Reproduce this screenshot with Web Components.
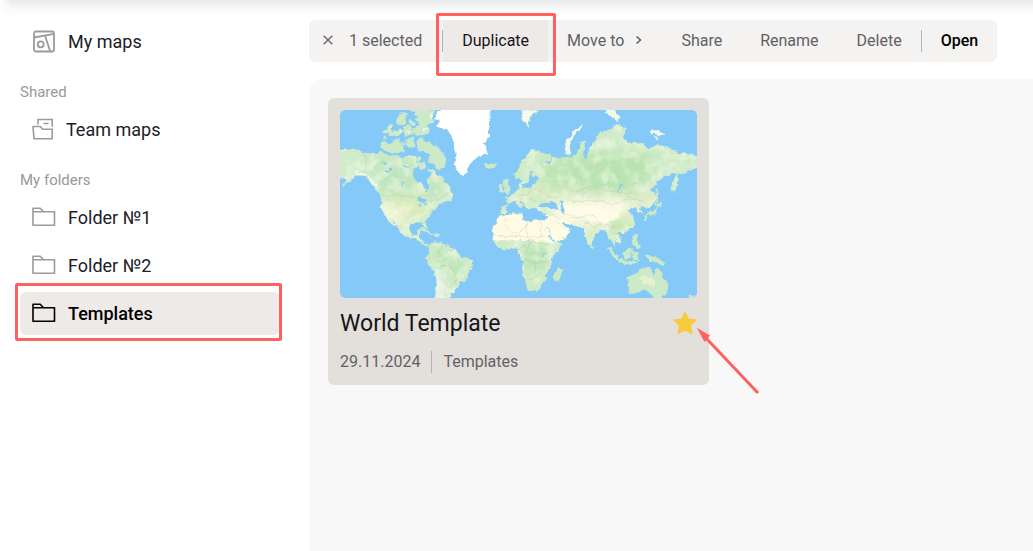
<!DOCTYPE html>
<html lang="en">
<head>
<meta charset="utf-8">
<meta name="viewport" content="width=device-width, initial-scale=1">
<title>Maps</title>
<style>
  body { margin: 0; background: #fff; color: #202027; font-family: Roboto, "Liberation Sans", sans-serif; font-size: 16px; }
</style>
</head>
<body>
<maps-app></maps-app>

<template id="t-maps-app">
  <style>
    :host { display: block; min-height: 100vh; }
    .layout { display: flex; gap: 29px; padding-left: 20px; }
    side-nav { flex: 0 0 260px; }
    main { flex: 1; min-width: 0; display: flex; flex-direction: column; gap: 17px; }
    .board { box-sizing: border-box; min-height: calc(100vh - 79px); padding: 19px; background: #f8f8f8; border-top-left-radius: 14px;
      display: grid; grid-template-columns: repeat(auto-fill, minmax(320px, 381px)); gap: 20px; align-items: start; align-content: start; }
  </style>
  <top-shade></top-shade>
  <div class="layout">
    <side-nav></side-nav>
    <main>
      <action-bar></action-bar>
      <section class="board" aria-label="Maps">
        <map-card>
          <span slot="title">World Template</span>
          <span slot="date">29.11.2024</span>
          <span slot="folder">Templates</span>
        </map-card>
      </section>
    </main>
  </div>
</template>

<template id="t-top-shade">
  <style>
    :host { display: block; height: 20px; background: linear-gradient(to right, #fff, #fff0 12px), linear-gradient(#e8eae9, #f1f2f2 5px, #fafafa 10px, #fff 17px); }
  </style>
</template>

<template id="t-side-nav">
  <style>
    :host { display: block; }
    nav { display: flex; flex-direction: column; }
    h2 { margin: 0; padding: 19px 0 6px; font-size: 15px; line-height: 20px; font-weight: 400; color: #9a9896; }
    .folders { display: flex; flex-direction: column; gap: 5px; }
    svg { display: block; fill: none; stroke: currentColor; }
  </style>
  <nav aria-label="Library">
    <nav-item>
      <svg slot="icon" width="24" height="24" viewBox="0 0 24 24" stroke-width="1.8"><rect x="2" y="1.500" width="20" height="20" rx="2"/><path d="M2 7.500L22 3.800M13 5.500L18.200 21.500"/><circle cx="8.700" cy="14.300" r="3"/></svg>
      My maps
    </nav-item>
    <h2>Shared</h2>
    <nav-item>
      <svg slot="icon" width="22" height="24" viewBox="0 0 22 24" stroke-width="1.6"><path d="M1 8.500H8.500L10.500 11.200H20.200V20.800H2Z" stroke-linejoin="round"/><path d="M6 6.500V1.500H20.200V8.700M11.500 5.500H16.500"/></svg>
      Team maps
    </nav-item>
    <h2>My folders</h2>
    <div class="folders">
      <nav-item>
        <svg slot="icon" width="24" height="24" viewBox="0 0 24 24" stroke-width="1.6"><path d="M1 19.300V2.200H8.200L11.500 5.700H22.500V19.300ZM1 5.700H12" stroke-linejoin="round"/></svg>
        Folder №1
      </nav-item>
      <nav-item>
        <svg slot="icon" width="24" height="24" viewBox="0 0 24 24" stroke-width="1.6"><path d="M1 19.300V2.200H8.200L11.500 5.700H22.500V19.300ZM1 5.700H12" stroke-linejoin="round"/></svg>
        Folder №2
      </nav-item>
      <nav-item selected>
        <svg slot="icon" width="24" height="24" viewBox="0 0 24 24" stroke-width="1.6"><path d="M1 19.300V2.200H8.200L11.500 5.700H22.500V19.300ZM1 5.700H12" stroke-linejoin="round"/></svg>
        Templates
      </nav-item>
    </div>
  </nav>
</template>

<template id="t-nav-item">
  <style>
    :host { display: block; position: relative; font-size: 18px; }
    a { display: flex; align-items: center; gap: 12px; height: 43px; padding-left: 12px; border-radius: 6px; color: #202027; text-decoration: none; white-space: nowrap; }
    .icon { color: #9d9a9a; }
    :host([selected]) a { background: #eeeae7; color: #000; font-weight: 500; }
    :host([selected]) .icon { color: #000; }
    .frame { display: none; position: absolute; inset: -9px -2px -6px -5px; border: 3px solid #ff6060; border-radius: 2px; pointer-events: none; }
    :host([selected]) .frame { display: block; }
  </style>
  <a href="#"><span class="icon"><slot name="icon"></slot></span><span><slot></slot></span></a>
  <span class="frame"></span>
</template>

<template id="t-action-bar">
  <style>
    :host { display: block; }
    .bar { display: flex; align-items: center; width: fit-content; max-width: 100%; height: 42px; background: #f5f3f2; border-radius: 6px; }
    .count { display: flex; align-items: center; gap: 15px; padding: 0 20px 2px 13px; color: #606065; white-space: nowrap; }
    .close { display: flex; padding: 0; border: 0; background: none; color: inherit; }
    .rule { width: 1px; height: 22px; background: #aeb4bc; }
    svg { display: block; fill: none; stroke: currentColor; stroke-width: 1.3; }
  </style>
  <div class="bar" role="toolbar" aria-label="Selection actions">
    <div class="count">
      <button class="close" aria-label="Clear selection"><svg width="12" height="12" viewBox="0 0 12 12"><path d="M1.700 1.700L10.300 10.300M10.300 1.700L1.700 10.300"/></svg></button>
      <span>1 selected</span>
    </div>
    <span class="rule"></span>
    <action-button active>Duplicate</action-button>
    <action-button>Move to<svg slot="after" width="8" height="10" viewBox="0 0 8 10"><path d="M1.500 1.500L5.500 5L1.500 8.500" stroke-width="1.600"/></svg></action-button>
    <action-button>Share</action-button>
    <action-button>Rename</action-button>
    <action-button>Delete</action-button>
    <span class="rule"></span>
    <action-button strong>Open</action-button>
  </div>
</template>

<template id="t-action-button">
  <style>
    :host { display: block; position: relative; }
    button { display: flex; align-items: center; gap: 11px; height: 42px; padding: 0 19px 2px; border: 0; background: none; color: #606065; font: inherit; white-space: nowrap; }
    :host([active]) button { background: #eeeae7; color: #15151c; }
    :host([strong]) button { color: #000; font-weight: 500; }
    .frame { display: none; position: absolute; inset: -7px -8px -14px -7px; border: 3px solid #ff6060; border-radius: 2px; pointer-events: none; z-index: 1; }
    :host([active]) .frame { display: block; }
  </style>
  <button><span><slot></slot></span><slot name="after"></slot></button>
  <span class="frame"></span>
</template>

<template id="t-map-card">
  <style>
    :host { display: block; position: relative; }
    article { padding: 12px; border-radius: 6px; background: #e3dfdb; }
    .head { display: flex; align-items: center; justify-content: space-between; margin-top: 7px; }
    h3 { margin: 0; padding-top: 3px; font-size: 23px; line-height: 32px; font-weight: 400; color: #15151a; }
    .meta { display: flex; align-items: center; gap: 11px; margin-top: 11px; line-height: 22px; color: #626266; }
    .rule { width: 1px; height: 22px; background: #aeb4bc; }
    .star { padding: 0; border: 0; background: none; }
    svg { display: block; }
    .arrow { position: absolute; left: 368px; top: 229px; pointer-events: none; }
  </style>
  <article>
    <world-map></world-map>
    <div class="head">
      <h3><slot name="title"></slot></h3>
      <button class="star" aria-label="Favourite"><svg width="24" height="24" viewBox="0 0 24 24"><path d="M12 2L15 8.600L22.400 9.300L16.900 14.300L18.500 21.900L12 18.300L5.500 21.900L7.100 14.300L1.600 9.300L9 8.600Z" fill="#f7cb3d" stroke="#f7cb3d" stroke-width="2" stroke-linejoin="round"/></svg></button>
    </div>
    <div class="meta"><slot name="date"></slot><span class="rule"></span><slot name="folder"></slot></div>
  </article>
  <svg class="arrow" width="66" height="70" viewBox="0 0 66 70" fill="#ff6060" aria-hidden="true"><path d="M8 9L62 66" stroke="#ff6060" stroke-width="3"/><path d="M1 1L14 8.500L8.500 15Z"/></svg>
</template>

<template id="t-world-map">
  <style>
    :host { display: block; border-radius: 6px; overflow: hidden; background: #84c9f8; }
    svg { display: block; width: 100%; height: auto; }
  </style>
  <svg viewBox="15 15 1071 564" role="img" aria-label="World map">
    <defs>
      <filter id="coast" x="-2%" y="-2%" width="104%" height="104%">
        <feTurbulence type="fractalNoise" baseFrequency="0.06" numOctaves="3" seed="4" result="n"/>
        <feDisplacementMap in="SourceGraphic" in2="n" scale="17" xChannelSelector="R" yChannelSelector="G"/>
        <feGaussianBlur stdDeviation="1"/>
      </filter>
      <filter id="soft" x="-30%" y="-30%" width="160%" height="160%"><feGaussianBlur stdDeviation="18"/></filter>
      <filter id="relief" x="0" y="0" width="100%" height="100%">
        <feTurbulence type="fractalNoise" baseFrequency="0.03" numOctaves="4" seed="9"/>
        <feColorMatrix values="0 0 0 0 1  0 0 0 0 .99  0 0 0 0 .86  3 0 0 0 -1.25"/>
      </filter>
      <clipPath id="land">
        <path d="M0 138L45 130L85 140L110 146L140 140L165 152L185 150L205 160L228 152L243 160L252 180L234 200L235 225L262 240L270 260L282 252L277 230L287 208L280 192L300 197L310 210L325 216L335 238L347 252L355 270L352 284L335 285L318 292L305 305L290 320L285 335L268 348L276 366L270 370L262 353L245 352L225 356L221 376L230 390L243 388L247 379L259 380L253 396L263 403L266 415L282 418L278 426L262 418L248 404L225 398L200 390L195 372L172 342L181 368L160 345L145 325L138 295L138 272L125 255L110 235L95 218L75 208L60 213L40 233L16 247L38 222L0 218Z"/>
        <path d="M283 422L300 409L335 420L360 432L375 455L413 465L413 483L400 505L395 525L372 535L362 555L348 565L340 590L298 590L306 540L300 500L285 487L272 463L280 445Z"/>
        <path d="M495 332L520 326L552 322L562 330L560 342L585 350L600 342L628 350L634 370L646 397L660 416L682 413L674 436L645 470L648 490L634 505L632 525L615 552L590 562L579 555L565 515L560 490L565 470L552 447L543 430L515 433L490 430L472 402L475 370Z"/>
        <path d="M497 302L518 300L516 282L509 275L530 270L545 257L554 247L554 232L562 234L562 250L590 248L601 233L612 220L602 210L595 218L588 208L594 190L586 198L583 218L577 238L564 237L556 218L541 222L538 203L552 188L568 160L582 142L602 132L620 142L646 150L650 163L632 168L640 178L658 158L700 155L728 147L738 112L748 108L750 133L744 165L756 160L762 130L785 100L800 80L830 70L850 58L876 75L864 98L885 113L925 115L940 130L965 118L1010 130L1030 148L1060 143L1096 160L1092 185L1060 198L1050 210L1030 205L1029 228L1018 264L1007 255L1012 232L1025 210L1010 205L985 218L960 235L948 250L966 276L958 296L935 308L915 307L923 330L910 322L906 308L888 307L875 317L894 330L898 360L885 375L862 386L845 380L861 402L855 416L840 405L839 425L850 443L832 412L820 392L808 370L798 370L785 386L775 402L772 427L758 415L745 372L725 362L698 357L680 352L705 376L695 396L660 414L645 386L628 355L632 340L634 325L611 318L607 305L630 307L672 312L665 297L646 290L616 290L611 306L584 315L574 307L560 291L548 286L565 302L556 310L537 290L520 296L518 312L511 324L497 325Z"/>
      </clipPath>
    </defs>
    <path fill="#84c9f8" d="M0 0H1100V600H0Z"/>
    <g filter="url(#coast)">
      <g clip-path="url(#land)">
        <path fill="#cfebc8" d="M0 0H1100V600H0Z"/>
        <g filter="url(#soft)">
          <path fill="#bfe6bd" d="M100 150L240 170L350 280L230 300L120 250Z"/>
          <path fill="#dcebbd" d="M140 285L260 270L285 330L200 370L160 340Z"/>
          <path fill="#fdf9df" d="M140 305L185 305L205 370L170 365Z"/>
          <path fill="#bce6b8" d="M280 420L400 460L370 530L300 480Z"/>
          <path fill="#fff" d="M302 490L322 490L322 590L302 590Z"/>
          <path fill="#bde6b7" d="M530 430L660 420L630 500L560 490Z"/>
          <path fill="#b9e3b1" d="M620 165L800 145L960 150L920 270L740 265L630 245Z"/>
          <path fill="#d6ecc0" d="M500 250L730 245L720 285L530 295Z"/>
          <path fill="#fffae3" d="M660 290L830 275L910 303L860 360L740 352L720 375L650 340Z"/>
          <path fill="#c4e6b4" d="M815 335L910 320L895 385L835 385Z"/>
          <path fill="#e1edc8" d="M740 355L810 365L775 435Z"/>
          <path fill="#e4edcc" d="M880 270L970 250L950 315Z"/>
        </g>
        <path fill="#fffbe2" d="M460 325L634 330L700 348L715 385L664 420L640 408L600 406L465 406Z"/>
        <path fill="#fffbe6" d="M752 325L780 312L812 320L846 318L852 335L815 352L780 355L755 342ZM690 300L730 308L745 330L700 335Z"/>
        <path d="M0 0H1100V600H0Z" filter="url(#relief)" opacity=".45"/>
        <g fill="none" stroke="#b4aaa0" stroke-width="1.500" opacity=".6">
          <path d="M90 140V210M140 273H240L275 292L318 280M165 345L205 370"/>
          <path d="M320 420L315 450L280 465M330 440L360 433M300 490L345 480L365 525L345 550M320 520L340 540L325 580"/>
          <path d="M475 395H630M510 340L515 370L545 390L580 365M575 350V390M620 350V395M550 432L600 412L640 420M585 410L575 440L610 450L640 440M570 465L605 475L640 470M600 475L595 520L570 530M595 520L620 500"/>
          <path d="M535 280L580 265L600 250L630 270L665 280M600 290L570 275M655 305L690 325L730 340L760 325L800 355L840 370M695 285L740 290L790 285L830 300L880 280L930 290M710 260L770 245L830 260L900 265M750 350L775 365L800 360M660 345L690 370"/>
        </g>
      </g>
      <g fill="#cdeac8" stroke="#cdeac8" stroke-width="3">
        <path d="M138 112L150 108L165 118L175 110L190 103L202 120L206 145L190 140L170 142L150 135L140 128Z"/>
        <path d="M145 80L165 55L176 60L168 76L178 82L192 68L205 78L192 88L162 92ZM185 45L198 30L215 35L210 58L195 60ZM204 68L220 62L235 75L232 90L210 90Z"/>
        <path d="M200 25L210 20L216 28L206 32ZM222 50L232 48L236 58L226 60ZM240 160L252 155L258 164L246 168ZM208 108L214 118L208 124ZM145 98L150 94L154 100Z"/>
        <path d="M245 108L262 100L270 118L285 110L310 130L332 160L328 186L310 195L300 178L280 172L290 150L272 140L250 135ZM250 175L268 170L272 190L256 190ZM215 105L235 98L238 128L220 125Z"/>
        <path d="M225 15L300 15L290 38L298 48L278 60L280 88L240 90L238 68L258 58L240 44L250 30Z"/>
        <path d="M450 175L466 178L482 173L480 185L462 190L452 186Z"/>
        <path d="M506 225L516 222L518 235L524 246L525 262L510 267L506 255L514 247L505 240ZM493 242L503 241L504 258L492 260Z"/>
        <path d="M245 378L265 370L285 378L295 388L312 388L310 392L280 386L262 376Z"/>
        <path d="M661 502L673 487L681 498L671 525L660 528L658 518Z"/>
        <path d="M557 15L608 15L596 28L585 38L577 68L565 48Z" fill="#f5fbf0"/>
        <path d="M963 250L971 262L971 278L966 290ZM962 293L980 298L967 308ZM964 310L962 325L947 330L928 338L926 332L948 323ZM928 337L936 340L932 347Z"/>
        <path d="M816 428L830 432L845 450L852 462L843 462L828 445ZM848 466L880 468L908 474L890 478L850 472ZM863 445L880 428L894 434L886 455L870 460ZM893 440L910 440L906 450L910 465L896 462ZM895 390L904 392L904 410L916 425L908 432L895 410Z"/>
        <path d="M930 450L945 455L965 458L990 474L987 482L968 474L950 470Z"/>
        <path d="M878 518L898 507L912 495L928 490L948 487L948 502L961 512L966 486L976 500L980 518L998 535L998 556L980 577L955 578L945 560L928 555L905 563L882 565L883 548Z"/>
        <path d="M1062 570L1075 570L1068 590ZM768 425L775 428L772 435Z"/>
      </g>
      <g fill="#f2faec" stroke="#f2faec" stroke-width="3">
        <path d="M694 148L690 135L698 108L710 85L730 70L740 62L738 72L718 90L706 112L703 130L708 145Z"/>
        <path d="M813 15L830 12L855 35L848 47L835 40ZM944 77L960 78L972 76L986 88L970 90L950 88ZM958 98L968 100L966 106Z"/>
        <path d="M285 35L292 30M265 78L278 70M215 78L226 80M190 72L198 78M160 75L170 68" fill="none" stroke-width="5"/>
      </g>
      <path fill="#fff" d="M300 40L318 15L330 0L470 0L462 55L462 95L447 115L457 143L430 157L408 170L398 190L388 216L370 202L358 175L365 150L358 125L350 92L332 72L306 66L312 48Z"/>
      <path fill="#84c9f8" d="M245 282L258 276L275 288L262 292ZM252 290L256 305L250 304ZM264 292L278 299L268 303ZM140 170L158 172L150 180ZM150 196L172 190L160 202ZM180 205L188 222L183 222ZM200 228L208 235L202 247ZM674 287L690 287L682 300L692 312L688 325L676 315ZM625 446L632 447L630 456ZM855 240L864 236L848 264ZM710 285L718 286L715 293ZM205 178L225 190L210 186Z"/>
      <path fill="none" stroke="#fff" stroke-width="5" opacity=".7" d="M55 200L80 205L100 215L122 242M185 325L175 318"/>
      <path fill="#fff8dc" opacity=".5" d="M910 520L935 512L960 525L960 540L925 538Z"/>
    </g>
  </svg>
</template>

<script>
  const names = ['top-shade', 'world-map', 'nav-item', 'action-button', 'side-nav', 'action-bar', 'map-card', 'maps-app'];
  for (const name of names) {
    customElements.define(name, class extends HTMLElement {
      constructor() {
        super();
        const template = document.getElementById('t-' + name);
        this.attachShadow({ mode: 'open' }).append(template.content.cloneNode(true));
      }
    });
  }
</script>
</body>
</html>
